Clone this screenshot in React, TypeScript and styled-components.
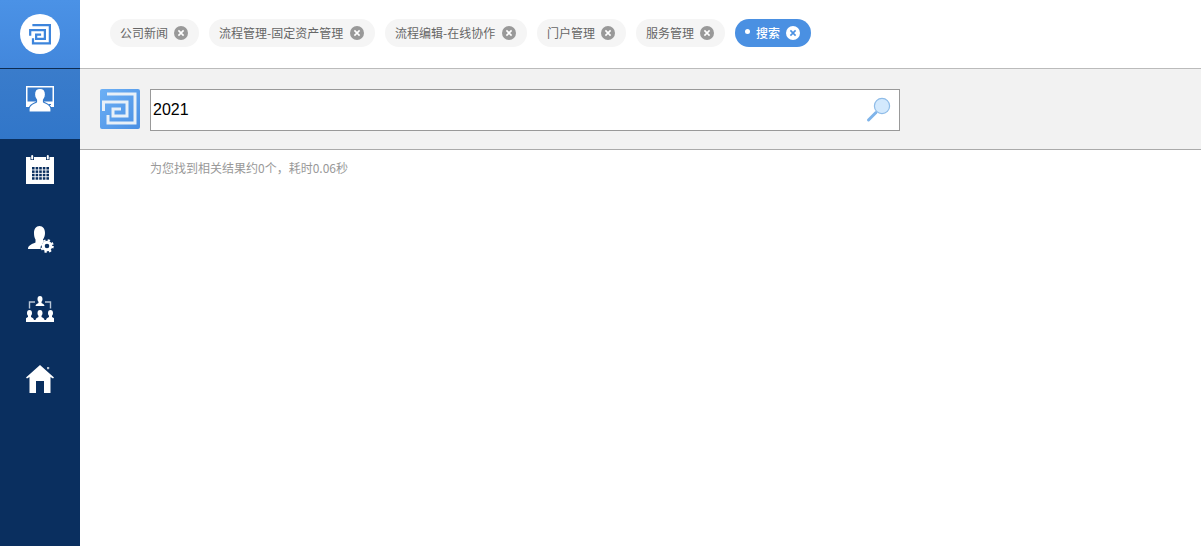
import styled, { createGlobalStyle } from "styled-components";

const tabs = [
  { label: "公司新闻", width: 89 },
  { label: "流程管理-固定资产管理", width: 166 },
  { label: "流程编辑-在线协作", width: 142 },
  { label: "门户管理", width: 89 },
  { label: "服务管理", width: 89 },
  { label: "搜索", width: 76, active: true },
];

const GlobalStyle = createGlobalStyle`
  html, body {
    margin: 0;
    height: 100%;
    background: #fff;
    overflow: hidden;
    font-family: "Liberation Sans", "Noto Sans CJK SC", sans-serif;
  }
  #root {
    height: 100%;
  }
`;

const LOGO_OUTER = "M7 5H35V34H8V26";
const LOGO_INNER = "M3.5 22V13H27V27H13V20H21";

function LogoMark({ size, color }: { size: number; color: string }) {
  return (
    <svg width={size} height={size} viewBox="0 0 40 40" fill="none">
      <path d={LOGO_OUTER} stroke={color} strokeWidth="3.6" />
      <path d={LOGO_INNER} stroke={color} strokeWidth="3.6" />
    </svg>
  );
}

function BrandTile() {
  return (
    <svg width="40" height="40" viewBox="0 0 40 40">
      <defs>
        <linearGradient id="tile" x1="0" y1="0" x2="1" y2="1">
          <stop offset="0" stopColor="#6db0f5" />
          <stop offset="1" stopColor="#4a8fe3" />
        </linearGradient>
      </defs>
      <rect width="40" height="40" rx="2" fill="url(#tile)" />
      <path d={LOGO_OUTER} fill="none" stroke="#e8f0f8" strokeWidth="3" />
      <path d={LOGO_INNER} fill="none" stroke="#e8f0f8" strokeWidth="3" />
    </svg>
  );
}

function MonitorIcon() {
  return (
    <svg width="28" height="26" viewBox="0 0 28 26" fill="#fff">
      <path
        fillRule="evenodd"
        d="M0 0H28V21H0ZM1.5 1.5V15.5H26.5V1.5Z"
      />
      <path
        d="M14 2.5C18 2.5 19.5 5.5 19.5 8.5C19.5 11 18.5 13 17.5 14V16C20 17.5 24 18 25 22.5V26H3V22.5C4 18 8 17.5 10.5 16V14C9.5 13 8.5 11 8.5 8.5C8.5 5.5 10 2.5 14 2.5Z"
        stroke="#3479c9"
        strokeWidth="1.2"
      />
      <rect x="23" y="18" width="2" height="1" fill="#3479c9" />
    </svg>
  );
}

function CalendarIcon() {
  const cells = [];
  for (let row = 0; row < 4; row++) {
    for (let col = 0; col < 5; col++) {
      cells.push(
        <rect key={`${row}-${col}`} x={6 + col * 3.6} y={12 + row * 3.4} width="2.6" height="2.5" fill="#0a2f5f" />,
      );
    }
  }
  return (
    <svg width="28" height="29" viewBox="0 0 28 29">
      <path d="M0 2H4.5V5H8V2H20V5H23.5V2H28V29H0Z" fill="#fff" />
      <rect x="5.2" y="0" width="2" height="4.5" rx="1" fill="#fff" />
      <rect x="20.8" y="0" width="2" height="4.5" rx="1" fill="#fff" />
      {cells}
    </svg>
  );
}

function UserGearIcon() {
  return (
    <svg width="28" height="28" viewBox="0 0 28 28" fill="#fff">
      <path d="M13.5 1C17 1 19 4 19 8C19 11 18 13 17 14.5V16L18 17C15.5 18.5 14.5 21 14.5 24H2C2 20.5 5 19.5 9.5 17.5V14.5C8.5 13 8 11 8 8C8 4 10 1 13.5 1Z" />
      <circle cx="21" cy="21" r="3.8" fill="none" stroke="#fff" strokeWidth="3" />
      <circle cx="21" cy="21" r="5.8" fill="none" stroke="#fff" strokeWidth="2" strokeDasharray="2.3 2.26" />
    </svg>
  );
}

function Person({ x, y }: { x: number; y: number }) {
  return (
    <path
      transform={`translate(${x} ${y})`}
      d="M4.5 0C6.2 0 7 1.2 7 3C7 4.3 6.5 5.2 6 5.8V7C7 7.6 8.7 8 9 10H0C0.3 8 2 7.6 3 7V5.8C2.5 5.2 2 4.3 2 3C2 1.2 2.8 0 4.5 0Z"
    />
  );
}

function OrgIcon() {
  return (
    <svg width="28" height="26" viewBox="0 0 28 26" fill="#fff">
      <path d="M9 6H3.5V12.5M19 6H24.5V12.5" fill="none" stroke="#b9c6d6" strokeWidth="1.4" />
      <Person x={9.5} y={0} />
      <Person x={-1} y={14} />
      <Person x={9.5} y={14} />
      <Person x={20} y={14} />
      <rect x="0" y="24" width="28" height="2" />
    </svg>
  );
}

function HomeIcon() {
  return (
    <svg width="28" height="28" viewBox="0 0 28 28" fill="#fff">
      <path d="M14 0L28 12.5L27 13.5L24.5 12V28H18V16H10V28H3.5V12L1 13.5L0 12.5Z" />
      <rect x="21" y="2" width="2.2" height="2.2" opacity="0.7" />
    </svg>
  );
}

function SearchIcon() {
  return (
    <svg width="26" height="26" viewBox="0 0 26 26">
      <path d="M10 15.5L2.5 23" stroke="#7fb4ea" strokeWidth="3" strokeLinecap="round" />
      <circle cx="16" cy="9" r="7.6" fill="#d3e9fd" stroke="#8fbce8" strokeWidth="1.2" />
    </svg>
  );
}

function CloseIcon({ active }: { active?: boolean }) {
  return (
    <svg width="14" height="14" viewBox="0 0 14 14">
      <circle cx="7" cy="7" r="7" fill={active ? "#fff" : "#999"} />
      <path
        d="M4.4 4.4L9.6 9.6M9.6 4.4L4.4 9.6"
        stroke={active ? "#4a90e2" : "#fff"}
        strokeWidth="1.6"
      />
    </svg>
  );
}

export default function App() {
  return (
    <Page>
      <GlobalStyle />
      <Sidebar>
        <BrandCell>
          <BrandCircle>
            <LogoMark size={25} color="#3d85dc" />
          </BrandCircle>
        </BrandCell>
        <NavItem $active>
          <MonitorIcon />
        </NavItem>
        <NavItem>
          <CalendarIcon />
        </NavItem>
        <NavItem>
          <UserGearIcon />
        </NavItem>
        <NavItem>
          <OrgIcon />
        </NavItem>
        <NavItem>
          <HomeIcon />
        </NavItem>
      </Sidebar>
      <Main>
        <TabBar>
          {tabs.map((tab) => (
            <Tab key={tab.label} $active={tab.active} $width={tab.width}>
              {tab.active && <Dot />}
              <span>{tab.label}</span>
              <CloseIcon active={tab.active} />
            </Tab>
          ))}
        </TabBar>
        <SearchBand>
          <BrandTile />
          <SearchBox>
            <SearchInput defaultValue="2021" />
            <SearchIcon />
          </SearchBox>
        </SearchBand>
        <ResultNote>为您找到相关结果约0个，耗时0.06秒</ResultNote>
      </Main>
    </Page>
  );
}

const Page = styled.div`
  display: flex;
  height: 100%;
`;

const Sidebar = styled.nav`
  width: 80px;
  flex-shrink: 0;
  background: #0a2f5f;
`;

const BrandCell = styled.div`
  height: 68px;
  display: flex;
  align-items: center;
  justify-content: center;
  background: linear-gradient(180deg, #4b92e6, #4287dc);
  border-bottom: 1px solid #0d2c52;
`;

const BrandCircle = styled.div`
  width: 40px;
  height: 40px;
  border-radius: 50%;
  background: #fff;
  display: flex;
  align-items: center;
  justify-content: center;
`;

const NavItem = styled.div<{ $active?: boolean }>`
  height: 70px;
  box-sizing: border-box;
  padding-bottom: 10px;
  display: flex;
  align-items: center;
  justify-content: center;
  background: ${({ $active }) =>
    $active ? "linear-gradient(180deg, #3a7ccb, #3176c9)" : "transparent"};
`;

const Main = styled.main`
  flex: 1;
  min-width: 0;
`;

const TabBar = styled.div`
  height: 69px;
  box-sizing: border-box;
  padding: 19px 0 0 30px;
  display: flex;
  align-items: flex-start;
  gap: 10px;
  border-bottom: 1px solid #bbb;
`;

const Tab = styled.div<{ $active?: boolean; $width: number }>`
  width: ${({ $width }) => $width}px;
  height: 28px;
  box-sizing: border-box;
  padding: 0 11px 0 10px;
  border-radius: 14px;
  display: flex;
  align-items: center;
  justify-content: space-between;
  font-size: 12px;
  font-weight: ${({ $active }) => ($active ? 500 : 400)};
  font-family: "Noto Sans CJK SC", sans-serif;
  white-space: nowrap;
  color: ${({ $active }) => ($active ? "#fff" : "#666")};
  background: ${({ $active }) => ($active ? "#4a90e2" : "#f5f5f5")};

  & > span {
    margin-top: -2px;
  }
`;

const Dot = styled.i`
  width: 5px;
  height: 5px;
  border-radius: 50%;
  background: #fff;
  margin-bottom: 3px;
`;

const SearchBand = styled.div`
  height: 81px;
  box-sizing: border-box;
  padding: 20px 0 0 20px;
  display: flex;
  align-items: flex-start;
  gap: 10px;
  background: #f2f2f2;
  border-bottom: 1px solid #aaa;
`;

const SearchBox = styled.div`
  width: 750px;
  height: 42px;
  box-sizing: border-box;
  padding: 0 7px 0 2px;
  display: flex;
  align-items: center;
  background: #fff;
  border: 1px solid #999;
`;

const SearchInput = styled.input`
  flex: 1;
  border: 0;
  outline: 0;
  padding: 0;
  font-size: 16px;
  font-family: "Liberation Sans", sans-serif;
  color: #000;
  background: transparent;
`;

const ResultNote = styled.p`
  margin: 10px 0 0 70px;
  font-size: 12px;
  line-height: 16px;
  color: #999;
  font-family: "Noto Sans CJK SC", sans-serif;
`;
